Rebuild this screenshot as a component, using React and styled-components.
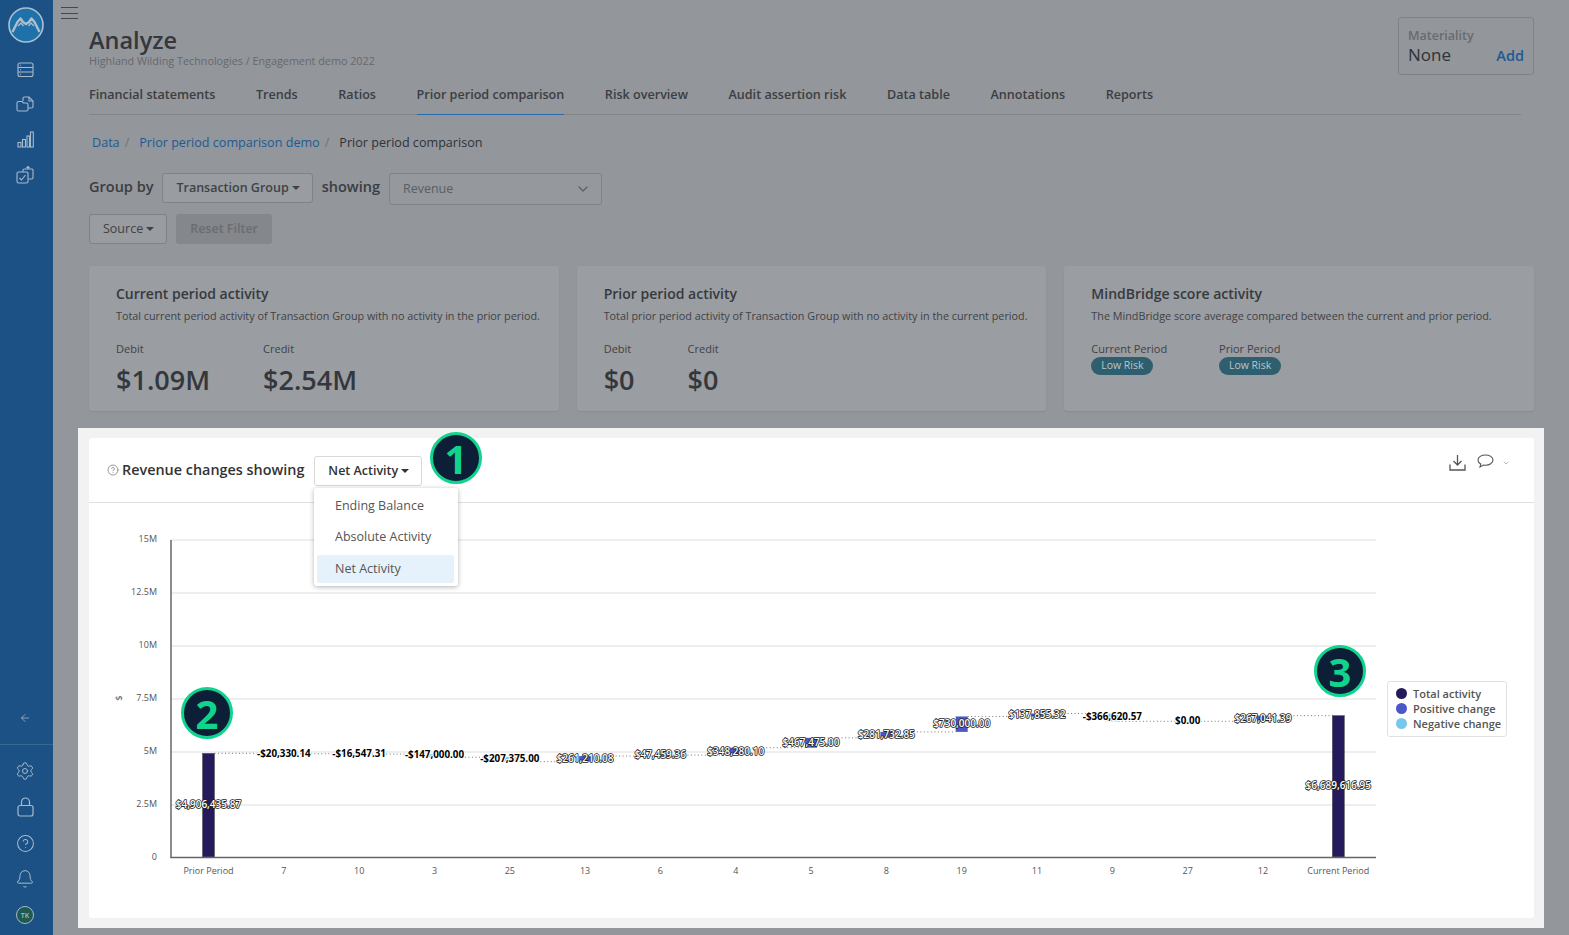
import styled, { createGlobalStyle } from 'styled-components';
import { ArrowLeft, Bell, ChevronDown, CircleHelp, Settings } from 'lucide-react';

const GlobalStyle = createGlobalStyle`
  html, body {
    margin: 0;
    padding: 0;
    background: #93969b;
  }
  * {
    box-sizing: border-box;
  }
  body {
    font-family: 'Open Sans', 'Liberation Sans', sans-serif;
    color: #36393d;
  }
`;

const tabs = [
  'Financial statements',
  'Trends',
  'Ratios',
  'Prior period comparison',
  'Risk overview',
  'Audit assertion risk',
  'Data table',
  'Annotations',
  'Reports',
];

const changes = [
  { name: '7', value: -20330.14, labelY: 752 },
  { name: '10', value: -16547.31, labelY: 752 },
  { name: '3', value: -147000, labelY: 753 },
  { name: '25', value: -207375, labelY: 757.5 },
  { name: '13', value: 261210.08, labelY: 757 },
  { name: '6', value: 47459.36, labelY: 753 },
  { name: '4', value: 348280.1, labelY: 749.5 },
  { name: '5', value: 467475, labelY: 740.5 },
  { name: '8', value: 281732.85, labelY: 733 },
  { name: '19', value: 730000, labelY: 721.5 },
  { name: '11', value: 137855.32, labelY: 712.5 },
  { name: '9', value: -366620.57, labelY: 715.5 },
  { name: '27', value: 0, labelY: 719 },
  { name: '12', value: 267041.39, labelY: 717 },
];

const START = 4906435.87;
const BASE_Y = 856;
const STEP = 75.32;
const FIRST_X = 208.5;
const toY = (v) => BASE_Y - (v * 21.13) / 1000000;
const money = (v) =>
  (v < 0 ? '-$' : '$') +
  Math.abs(v).toLocaleString('en-US', { minimumFractionDigits: 2, maximumFractionDigits: 2 });

const yTicks = [
  ['15M', 539],
  ['12.5M', 592],
  ['10M', 645],
  ['7.5M', 698],
  ['5M', 751],
  ['2.5M', 804],
];

const Page = styled.div`
  position: relative;
  display: flex;
  width: 1569px;
  height: 935px;
  overflow: hidden;
`;

const Sidebar = styled.nav`
  flex: 0 0 53px;
  display: flex;
  flex-direction: column;
  align-items: center;
  background: #1b5185;
  color: #a9bacb;
`;

const Logo = styled.svg`
  width: 36px;
  height: 36px;
  margin: 7px 1px 0 0;
`;

const NavIcon = styled.div`
  display: flex;
  align-items: center;
  justify-content: center;
  width: 100%;
  height: ${(p) => p.$h || 35}px;
  padding-right: 3px;
`;

const SideGroup = styled.div`
  display: flex;
  flex-direction: column;
  width: 100%;
  margin-top: ${(p) => p.$mt || 0}px;
`;

const SideFoot = styled.div`
  display: flex;
  flex-direction: column;
  width: 100%;
  margin-top: 17px;
  padding-top: 8px;
  border-top: 1px solid #3a6895;
`;

const Avatar = styled.div`
  display: flex;
  align-items: center;
  justify-content: center;
  width: 18px;
  height: 18px;
  border-radius: 50%;
  border: 1px solid #a9bacb;
  background: #1d5a50;
  font-size: 7px;
  font-weight: 600;
`;

const Main = styled.main`
  flex: 1;
  min-width: 0;
  padding: 0 35px 0 36px;
`;

const Topbar = styled.header`
  display: flex;
  justify-content: space-between;
  height: 83px;
`;

const Hamburger = styled.div`
  display: flex;
  flex-direction: column;
  gap: 4.5px;
  width: 17px;
  margin: 7px 0 6px -28px;
  span {
    height: 1px;
    background: #45484c;
  }
`;

const Title = styled.h1`
  margin: 0;
  font-size: 23.5px;
  line-height: 31px;
  font-weight: 600;
  color: #34373b;
`;

const Subtitle = styled.div`
  margin-top: -2px;
  font-size: 10.8px;
  line-height: 14px;
  color: #66696d;
`;

const MaterialityBox = styled.div`
  width: 136px;
  height: 58px;
  margin-top: 17px;
  padding: 9px;
  border: 1px solid #7f8287;
  border-radius: 3px;
`;

const MaterialityLabel = styled.div`
  font-size: 12.5px;
  line-height: 18px;
  font-weight: 600;
  color: #686b6f;
`;

const MaterialityRow = styled.div`
  display: flex;
  justify-content: space-between;
  align-items: baseline;
  font-size: 17px;
  line-height: 20px;
  color: #2f3236;
  a {
    font-size: 14.5px;
    font-weight: 600;
    color: #1c5a94;
  }
`;

const TabBar = styled.div`
  display: flex;
  gap: 40.55px;
  height: 32px;
  margin-right: 13px;
  border-bottom: 1px solid #818489;
`;

const Tab = styled.div`
  height: 32px;
  padding-top: 3px;
  font-size: 12.6px;
  line-height: 18px;
  font-weight: 600;
  color: #3b3e42;
  border-bottom: ${(p) => (p.$active ? '1px solid #2a6cab' : 'none')};
`;

const Crumbs = styled.div`
  display: flex;
  align-items: center;
  height: 18px;
  margin-top: 18px;
  padding-left: 3px;
  font-size: 12.6px;
  color: #2f3236;
`;

const Crumb = styled.a`
  color: #1c5a94;
`;

const CrumbSep = styled.span`
  margin: 0 10px 0 5px;
  color: #707377;
`;

const FilterRow = styled.div`
  display: flex;
  align-items: flex-start;
  margin-top: 22px;
`;

const FilterLabel = styled.span`
  margin: ${(p) => p.$m || '0'};
  font-size: 14.5px;
  line-height: 28px;
  font-weight: 600;
  color: #3a3d41;
`;

const Dropdown = styled.div`
  display: flex;
  align-items: center;
  gap: 3px;
  height: ${(p) => p.$h || 30}px;
  padding: 0 12px 2px 13px;
  border: 1px solid ${(p) => (p.$light ? '#d9d9d9' : '#7f8287')};
  border-radius: 3px;
  background: ${(p) => (p.$light ? '#fff' : '#999ca0')};
  font-size: 12.5px;
  font-weight: 600;
  color: ${(p) => (p.$light ? '#333' : '#3f4246')};
  &::after {
    content: '';
    margin-top: 2px;
    border: 4px solid transparent;
    border-top-color: currentColor;
    border-bottom: 0;
  }
`;

const Select = styled.div`
  display: flex;
  align-items: center;
  justify-content: space-between;
  width: 213px;
  height: 32px;
  padding: 0 10px 1px 13px;
  border: 1px solid #7f8287;
  border-radius: 3px;
  background: #95989d;
  font-size: 12.5px;
  color: #5b5e62;
`;

const ButtonRow = styled.div`
  display: flex;
  gap: 9px;
  margin-top: 9px;
`;

const SourceButton = styled(Dropdown)`
  font-weight: 400;
`;

const ResetButton = styled.div`
  display: flex;
  align-items: center;
  height: 30px;
  padding: 0 14px 2px;
  border-radius: 3px;
  background: #84878b;
  font-size: 12.5px;
  font-weight: 600;
  color: #6a6d70;
`;

const Cards = styled.section`
  display: grid;
  grid-template-columns: repeat(3, minmax(0, 1fr));
  gap: 18px;
  margin-top: 22px;
`;

const Card = styled.article`
  height: 145px;
  padding: 18px 27px;
  border-radius: 3px;
  background: #9a9da1;
  box-shadow: 0 1px 2px rgba(0, 0, 0, 0.08);
`;

const CardTitle = styled.h3`
  margin: 0;
  font-size: 14px;
  line-height: 19px;
  font-weight: 600;
  color: #36393d;
`;

const CardText = styled.p`
  margin: 5px 0 0;
  font-size: 10.8px;
  line-height: 16px;
  white-space: nowrap;
  color: #3f4246;
`;

const Stats = styled.div`
  display: flex;
  gap: ${(p) => p.$gap}px;
  margin-top: 17px;
`;

const StatLabel = styled.div`
  font-size: 11px;
  line-height: 16px;
  color: #3f4246;
`;

const StatValue = styled.div`
  margin-top: 5px;
  font-size: 27px;
  line-height: 36px;
  font-weight: 600;
  color: #34373b;
`;

const RiskPill = styled.div`
  width: 62px;
  height: 18px;
  border-radius: 9px;
  background: #2f5f6e;
  font-size: 10.5px;
  line-height: 17px;
  text-align: center;
  color: #b8c6cb;
`;

const Spotlight = styled.section`
  position: relative;
  height: 500px;
  margin: 17px -10px 0 -11px;
  padding: 10px 10px 10px 11px;
  background: #f2f2f2;
`;

const Panel = styled.div`
  height: 480px;
  border-radius: 3px;
  background: #fff;
`;

const PanelHeader = styled.div`
  display: flex;
  height: 65px;
  padding: 18px 24px 0 18px;
  border-bottom: 1px solid #e0e0e0;
`;

const PanelTitle = styled.div`
  display: flex;
  align-items: center;
  gap: 3px;
  height: 27px;
  margin-right: 10px;
  font-size: 14.4px;
  font-weight: 600;
  color: #333;
`;

const PanelTools = styled.div`
  display: flex;
  align-items: flex-start;
  gap: 11px;
  margin: -2px 0 0 auto;
  color: #555;
`;

const ToolChevron = styled(ChevronDown)`
  margin: 5px 0 0 -3px;
  color: #999;
`;

const Menu = styled.div`
  position: absolute;
  left: 236px;
  top: 60px;
  z-index: 2;
  width: 144px;
  height: 98px;
  padding: 3px 4px 3px 3px;
  border-radius: 3px;
  background: #fff;
  box-shadow: 0 1px 5px rgba(0, 0, 0, 0.3);
`;

const MenuItem = styled.div`
  height: ${(p) => p.$h}px;
  margin-top: ${(p) => p.$mt || 0}px;
  padding-left: 18px;
  border-radius: 2px;
  background: ${(p) => (p.$selected ? '#e6f2fb' : 'transparent')};
  font-size: 12.5px;
  line-height: ${(p) => p.$h}px;
  color: #555;
`;

const Badge = styled.div`
  position: absolute;
  left: ${(p) => p.$x - 26}px;
  top: ${(p) => p.$y - 26}px;
  z-index: 3;
  display: flex;
  align-items: center;
  justify-content: center;
  width: 52px;
  height: 52px;
  border: 3px solid #10d48d;
  border-radius: 50%;
  background: #0c1f36;
  font-size: 40px;
  font-weight: 700;
  color: #10d48d;
`;

const ChartBody = styled.div`
  display: flex;
  align-items: flex-start;
`;

const ChartSvg = styled.svg`
  display: block;
  flex: 0 0 1290px;
  width: 1290px;
  height: 414px;
  font-family: 'Open Sans', 'Liberation Sans', sans-serif;
`;

const Legend = styled.div`
  display: flex;
  flex-direction: column;
  width: 120px;
  margin: 178px 0 0 8px;
  padding: 4px 6px 5px 8px;
  border: 1px solid #e2e2e2;
  border-radius: 3px;
`;

const LegendItem = styled.div`
  display: flex;
  align-items: center;
  gap: 6px;
  height: 15px;
  font-size: 11px;
  font-weight: 600;
  white-space: nowrap;
  color: #555;
  &::before {
    content: '';
    flex: 0 0 11px;
    height: 11px;
    border-radius: 50%;
    background: ${(p) => p.$color};
  }
`;

const DataLabel = styled.text`
  font-size: ${(p) => (p.$neg ? 9.8 : 10)}px;
  text-anchor: middle;
  dominant-baseline: central;
  paint-order: stroke;
  stroke-linejoin: round;
  font-weight: ${(p) => (p.$neg ? 700 : 600)};
  fill: ${(p) => (p.$neg ? '#000' : '#fff')};
  stroke: ${(p) => (p.$neg ? '#fff' : '#222')};
  stroke-width: ${(p) => (p.$neg ? 2 : 1.6)}px;
`;

const AxisText = styled.text`
  font-size: ${(p) => p.$size || 9}px;
  fill: #555;
  text-anchor: ${(p) => p.$anchor || 'middle'};
  dominant-baseline: central;
`;

const LogoMark = () => (
  <Logo viewBox='0 0 36 36' fill='none'>
    <circle cx='18' cy='18' r='17' fill='#1f72a9' stroke='#aebfd0' strokeWidth='1.6' />
    <path
      d='M4.5 25 L9.5 15 L12.5 11.5 L15 15 L18 17 L21 15 L23.5 11.5 L26.5 15 L31.5 25'
      stroke='#aebfd0'
      strokeWidth='2.4'
      strokeLinejoin='round'
    />
    <path d='M10 19 L13 16 L15.5 19 M20.5 19 L23 16 L26 19' stroke='#aebfd0' strokeWidth='1.2' />
  </Logo>
);

const StackIcon = () => (
  <svg width='17' height='17' viewBox='0 0 17 17' fill='none' stroke='currentColor' strokeWidth='1.1'>
    <rect x='1' y='2' width='15' height='13.5' rx='2' />
    <path d='M1 6.5h15M1 11h15M3 4.2h1M3 8.7h1M3 13.2h1' />
  </svg>
);

const FilesIcon = () => (
  <svg width='18' height='17' viewBox='0 0 18 17' fill='none' stroke='currentColor' strokeWidth='1.1'>
    <path d='M7 5V2.5C7 1.7 7.7 1 8.5 1H13l4 4v5.5c0 .8-.7 1.5-1.5 1.5H12' />
    <path d='M13 1v4h4' />
    <path d='M1 7c0-.8.7-1.5 1.5-1.5H6L7.5 7h3c.8 0 1.5.7 1.5 1.5v5c0 .8-.7 1.5-1.5 1.5h-8C1.7 15 1 14.3 1 13.5z' />
  </svg>
);

const BarsIcon = () => (
  <svg width='17' height='17' viewBox='0 0 17 17' fill='none' stroke='currentColor' strokeWidth='1.1'>
    <rect x='1' y='11.5' width='3' height='4.5' />
    <rect x='5.5' y='8.5' width='3' height='7.5' />
    <rect x='10' y='5' width='2.5' height='11' />
    <rect x='13.5' y='1' width='2.8' height='15' />
  </svg>
);

const ExportIcon = () => (
  <svg width='18' height='18' viewBox='0 0 18 18' fill='none' stroke='currentColor' strokeWidth='1.1'>
    <path d='M7 6V4.5C7 3.7 7.7 3 8.5 3H16c.6 0 1 .4 1 1v7.5c0 .8-.7 1.5-1.5 1.5H12.5' />
    <rect x='1' y='6' width='11' height='11' rx='1.5' />
    <path d='M3.5 12l2 2 4-5M12 3V1M10.5 2 12 .5 13.5 2' />
  </svg>
);

const LockIcon = () => (
  <svg width='17' height='20' viewBox='0 0 17 20' fill='none' stroke='currentColor' strokeWidth='1.2'>
    <rect x='1' y='8.5' width='15' height='10.5' rx='2' />
    <path d='M4.5 8.5V5a4 4 0 0 1 8 0v3.5' />
  </svg>
);

const DownloadIcon = () => (
  <svg width='17' height='17' viewBox='0 0 17 17' fill='none' stroke='currentColor' strokeWidth='1.3'>
    <path d='M8.5 1v10M4.5 7l4 4 4-4M1 10.5V16h15v-5.5' />
  </svg>
);

const CommentIcon = () => (
  <svg width='17' height='14' viewBox='0 0 17 14' fill='none' stroke='currentColor' strokeWidth='1.1'>
    <path d='M8.5 1C4.5 1 1 3 1 6c0 1.7 1 3.1 2.7 4L3 13l3.3-2c.7.1 1.4.2 2.2.2 4 0 7.5-2.2 7.5-5.2S12.5 1 8.5 1z' />
  </svg>
);

const WaterfallChart = () => {
  let running = START;
  const steps = changes.map((item, i) => {
    const from = running;
    running += item.value;
    return { ...item, x: FIRST_X + STEP * (i + 1), from, to: running };
  });
  const endX = FIRST_X + STEP * (changes.length + 1);

  return (
    <ChartSvg viewBox='89 502 1290 414'>
      {yTicks.map(([label, y]) => (
        <g key={label}>
          <line x1='171' x2='1376' y1={y} y2={y} stroke='#e8e8e8' strokeWidth='1.3' />
          <AxisText x='157' y={y - 1.5} $anchor='end'>
            {label}
          </AxisText>
        </g>
      ))}
      <AxisText x='157' y={855} $anchor='end'>
        0
      </AxisText>
      <AxisText x='118' y='697' $size={9.5} transform='rotate(-90 118 697)'>
        $
      </AxisText>

      <line x1={FIRST_X + 6} x2={FIRST_X + STEP - 6} y1={toY(START)} y2={toY(START)} stroke='#777' strokeWidth='1' strokeDasharray='1 2.5' />
      {steps.map((s) => (
        <line
          key={s.name}
          x1={s.x + 6}
          x2={s.x + STEP - 6}
          y1={toY(s.to)}
          y2={toY(s.to)}
          stroke='#777'
          strokeWidth='1'
          strokeDasharray='1 2.5'
        />
      ))}

      <rect x={FIRST_X - 6} y={toY(START)} width='12' height={BASE_Y - toY(START)} fill='#241a5c' stroke='#555' strokeWidth='.6' />
      <rect x={endX - 6} y={toY(running)} width='12' height={BASE_Y - toY(running)} fill='#241a5c' stroke='#555' strokeWidth='.6' />
      {steps.map((s) => (
        <rect
          key={s.name}
          x={s.x - 6}
          y={Math.min(toY(s.from), toY(s.to))}
          width='12'
          height={Math.abs(toY(s.from) - toY(s.to))}
          fill={s.value < 0 ? '#76c9ee' : '#4b57c7'}
        />
      ))}

      <line x1='171' x2='171' y1='539' y2='857' stroke='#666' strokeWidth='1.5' />
      <line x1='170.5' x2='1376' y1='856.5' y2='856.5' stroke='#666' strokeWidth='1.5' />

      <DataLabel x={FIRST_X} y='803'>
        {money(START)}
      </DataLabel>
      <DataLabel x={endX} y='784'>
        {money(running)}
      </DataLabel>
      {steps.map((s) => (
        <DataLabel key={s.name} x={s.x} y={s.labelY} $neg={s.value <= 0}>
          {money(s.value)}
        </DataLabel>
      ))}

      <AxisText x={FIRST_X} y='869'>
        Prior Period
      </AxisText>
      {steps.map((s) => (
        <AxisText key={s.name} x={s.x} y='869'>
          {s.name}
        </AxisText>
      ))}
      <AxisText x={endX} y='869'>
        Current Period
      </AxisText>
    </ChartSvg>
  );
};

const App = () => {
  return (
    <Page>
      <GlobalStyle />
      <Sidebar>
        <LogoMark />
        <SideGroup $mt={9}>
          <NavIcon><StackIcon /></NavIcon>
          <NavIcon><FilesIcon /></NavIcon>
          <NavIcon><BarsIcon /></NavIcon>
          <NavIcon><ExportIcon /></NavIcon>
        </SideGroup>
        <SideGroup $mt={517}>
          <NavIcon $h={18}><ArrowLeft size={12} strokeWidth={1.5} /></NavIcon>
        </SideGroup>
        <SideFoot>
          <NavIcon $h={36}><Settings size={20} strokeWidth={1.2} /></NavIcon>
          <NavIcon $h={36}><LockIcon /></NavIcon>
          <NavIcon $h={36}><CircleHelp size={19} strokeWidth={1.3} /></NavIcon>
          <NavIcon $h={36}><Bell size={20} strokeWidth={1.2} /></NavIcon>
          <NavIcon $h={36}><Avatar>TK</Avatar></NavIcon>
        </SideFoot>
      </Sidebar>

      <Main>
        <Topbar>
          <div>
            <Hamburger>
              <span />
              <span />
              <span />
            </Hamburger>
            <Title>Analyze</Title>
            <Subtitle>Highland Wilding Technologies / Engagement demo 2022</Subtitle>
          </div>
          <MaterialityBox>
            <MaterialityLabel>Materiality</MaterialityLabel>
            <MaterialityRow>
              None
              <a>Add</a>
            </MaterialityRow>
          </MaterialityBox>
        </Topbar>

        <TabBar>
          {tabs.map((tab) => (
            <Tab key={tab} $active={tab === 'Prior period comparison'}>
              {tab}
            </Tab>
          ))}
        </TabBar>

        <Crumbs>
          <Crumb>Data</Crumb>
          <CrumbSep>/</CrumbSep>
          <Crumb>Prior period comparison demo</Crumb>
          <CrumbSep>/</CrumbSep>
          Prior period comparison
        </Crumbs>

        <FilterRow>
          <FilterLabel $m='0 9px 0 0'>Group by</FilterLabel>
          <Dropdown>Transaction Group</Dropdown>
          <FilterLabel $m='0 9px'>showing</FilterLabel>
          <Select>
            Revenue
            <ChevronDown size={16} strokeWidth={1.8} />
          </Select>
        </FilterRow>

        <ButtonRow>
          <SourceButton>Source</SourceButton>
          <ResetButton>Reset Filter</ResetButton>
        </ButtonRow>

        <Cards>
          <Card>
            <CardTitle>Current period activity</CardTitle>
            <CardText>Total current period activity of Transaction Group with no activity in the prior period.</CardText>
            <Stats $gap={53}>
              <div>
                <StatLabel>Debit</StatLabel>
                <StatValue>$1.09M</StatValue>
              </div>
              <div>
                <StatLabel>Credit</StatLabel>
                <StatValue>$2.54M</StatValue>
              </div>
            </Stats>
          </Card>
          <Card>
            <CardTitle>Prior period activity</CardTitle>
            <CardText>Total prior period activity of Transaction Group with no activity in the current period.</CardText>
            <Stats $gap={53}>
              <div>
                <StatLabel>Debit</StatLabel>
                <StatValue>$0</StatValue>
              </div>
              <div>
                <StatLabel>Credit</StatLabel>
                <StatValue>$0</StatValue>
              </div>
            </Stats>
          </Card>
          <Card>
            <CardTitle>MindBridge score activity</CardTitle>
            <CardText>The MindBridge score average compared between the current and prior period.</CardText>
            <Stats $gap={52}>
              <div>
                <StatLabel>Current Period</StatLabel>
                <RiskPill>Low Risk</RiskPill>
              </div>
              <div>
                <StatLabel>Prior Period</StatLabel>
                <RiskPill>Low Risk</RiskPill>
              </div>
            </Stats>
          </Card>
        </Cards>

        <Spotlight>
          <Panel>
            <PanelHeader>
              <PanelTitle>
                <CircleHelp size={12} strokeWidth={1.3} color='#666' />
                Revenue changes showing
              </PanelTitle>
              <Dropdown $light>Net Activity</Dropdown>
              <PanelTools>
                <DownloadIcon />
                <CommentIcon />
                <ToolChevron size={8} />
              </PanelTools>
            </PanelHeader>
            <ChartBody>
              <WaterfallChart />
              <Legend>
                <LegendItem $color='#241a5c'>Total activity</LegendItem>
                <LegendItem $color='#4b57c7'>Positive change</LegendItem>
                <LegendItem $color='#76c9ee'>Negative change</LegendItem>
              </Legend>
            </ChartBody>
          </Panel>
          <Menu>
            <MenuItem $h={30}>Ending Balance</MenuItem>
            <MenuItem $h={31}>Absolute Activity</MenuItem>
            <MenuItem $h={28} $mt={3} $selected>Net Activity</MenuItem>
          </Menu>
          <Badge $x={378} $y={30}>1</Badge>
          <Badge $x={129} $y={285}>2</Badge>
          <Badge $x={1262} $y={243}>3</Badge>
        </Spotlight>
      </Main>
    </Page>
  );
};

export default App;
